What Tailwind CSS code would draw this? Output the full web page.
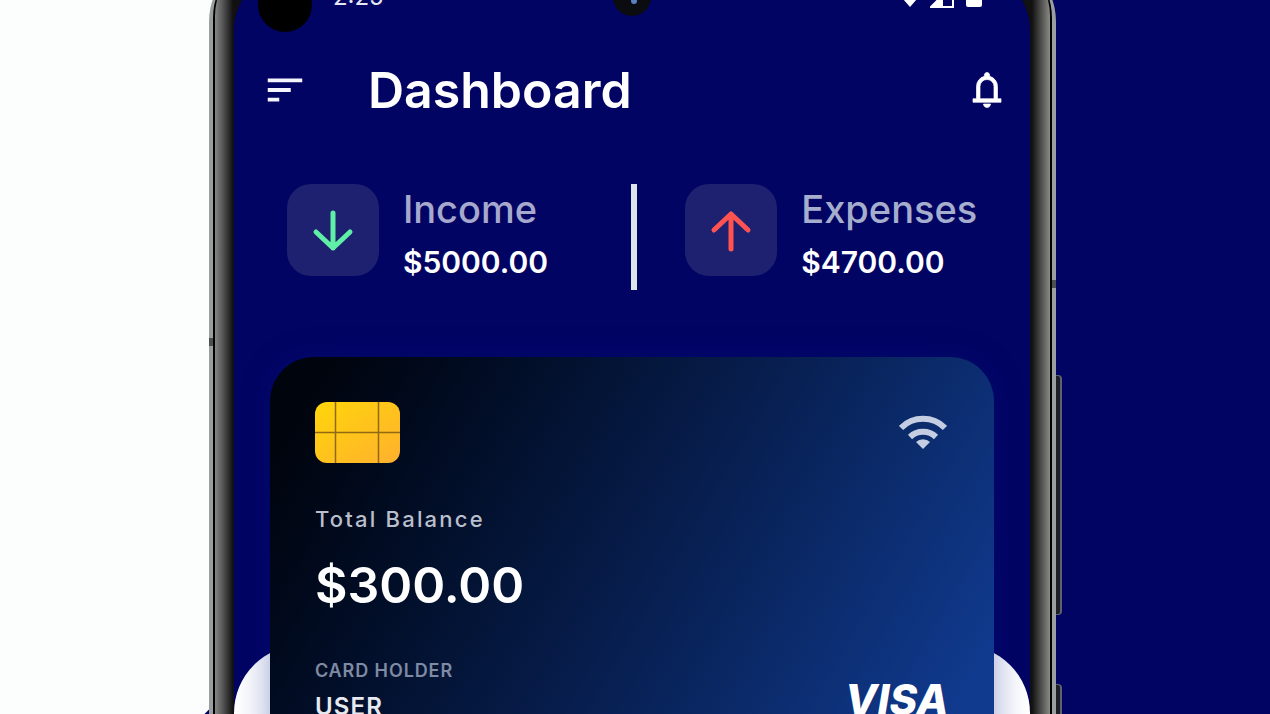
<!DOCTYPE html>
<html lang="en">
    <head>
        <meta charset="UTF-8">
        <meta name="viewport" content="width=device-width, initial-scale=1.0">
        <title>Wallet | Dashboard</title>
        <script src="https://cdn.jsdelivr.net/npm/@tailwindcss/browser@4"></script>
    </head>
    <body
        class="relative h-screen overflow-hidden bg-linear-to-r from-[#fcfefd] from-50% to-[#020463] to-50% font-['Inter',sans-serif] text-white">

        <!-- Backdrop corner -->
        <div
            class="absolute bottom-0 left-[16%] size-3 translate-x-1 translate-y-1.5 rotate-45 bg-[#020463]"></div>

        <!-- Phone -->
        <div class="relative ml-[16.45%] -mt-12 w-2/3">

            <!-- Side keys -->
            <div
                class="absolute -right-1.5 top-[423px] h-60 w-2 rounded-r-sm border-r-2 border-y border-[#5d636d] bg-[#1c1f26]"></div>
            <div
                class="absolute -right-1.5 top-[732px] h-60 w-2 rounded-r-sm border-r-2 border-y border-[#5d636d] bg-[#1c1f26]"></div>

            <!-- Frame -->
            <div class="relative rounded-t-[70px] bg-[#9b9e9f] px-1">
                <div class="absolute left-0 top-[386px] h-2 w-1 bg-[#4c4f50]"></div>
                <div
                    class="absolute right-0 top-[328px] h-2 w-1 bg-[#4c4f50]"></div>
                <div class="rounded-t-[66px] bg-black px-0.5">
                    <div
                        class="rounded-t-[64px] bg-[linear-gradient(to_right,#858585,#5a5a5a_7px,#111_18px,#111_calc(100%-18px),#5a5a58_calc(100%-7px),#8a8a86)] pl-[19px] pr-5 pt-[18px]">

                        <!-- Screen -->
                        <main
                            class="relative h-[900px] overflow-hidden rounded-t-[60px] bg-[#020463]">

                            <!-- Cameras -->
                            <div
                                class="absolute left-6 top-2 size-[54px] rounded-full bg-black"></div>
                            <div
                                class="absolute left-1/2 top-2 flex size-[38px] -translate-x-1/2 items-center justify-center rounded-full bg-[#0b0c10]">
                                <span
                                    class="ml-1 mt-2 size-1.5 rounded-full bg-[#5a7fc4]"></span>
                            </div>

                            <!-- Status bar -->
                            <div
                                class="flex h-[54px] items-center justify-between pl-[99px] pr-12">
                                <span
                                    class="text-2xl leading-8 text-[#e4e6f2]">2:25</span>
                                <div class="flex items-center gap-1">
                                    <svg class="h-6 w-8" viewBox="0 0 32 24"
                                        fill="#fff">
                                        <path
                                            d="M16 22 2 6a21 21 0 0 1 28 0z" />
                                    </svg>
                                    <svg class="h-6 w-6" viewBox="0 0 24 24">
                                        <path d="M1 22 23 0v22z" fill="none"
                                            stroke="#fff" stroke-width="2" />
                                        <path d="M1 22 13 10v12z"
                                            fill="#fff" />
                                    </svg>
                                    <svg class="ml-2 h-6 w-4"
                                        viewBox="0 0 16 24" fill="#fff">
                                        <path
                                            d="M5 0h6v3h3a2 2 0 0 1 2 2v15a2 2 0 0 1-2 2H2a2 2 0 0 1-2-2V5a2 2 0 0 1 2-2h3z" />
                                    </svg>
                                </div>
                            </div>

                            <!-- Header -->
                            <header
                                class="flex h-[132px] items-center pl-7 pr-[22px]">
                                <button type="button" aria-label="Menu">
                                    <svg class="size-[46px]"
                                        viewBox="0 0 24 24" fill="#f4f5ff">
                                        <path
                                            d="M3 18h6v-2H3v2zM3 6v2h18V6H3zm0 7h12v-2H3v2z" />
                                    </svg>
                                </button>
                                <h1
                                    class="ml-[60px] text-[50px] leading-[64px] font-semibold">Dashboard</h1>
                                <button type="button" class="ml-auto"
                                    aria-label="Notifications">
                                    <svg class="size-[42px]"
                                        viewBox="0 -960 960 960" fill="#fff"
                                        stroke="#fff" stroke-width="16">
                                        <path
                                            d="M160-200v-80h80v-280q0-83 50-147.5T420-792v-28q0-25 17.5-42.5T480-880t42.5 17.5T540-820v28q80 20 130 84.5T720-560v280h80v80H160Zm320 120q-33 0-56.5-23.5T400-160h160q0 33-23.5 56.5T480-80ZM320-280h320v-280q0-66-47-113t-113-47q-66 0-113 47t-47 113v280Z" />
                                    </svg>
                                </button>
                            </header>

                            <!-- Income / expenses -->
                            <section class="mt-7 flex">
                                <div class="flex flex-1 gap-6 pl-[53px]">
                                    <div
                                        class="flex size-[92px] items-center justify-center rounded-3xl bg-[#1e2170]">
                                        <svg class="size-11"
                                            viewBox="0 0 44 44" fill="none"
                                            stroke="#5fefa6" stroke-width="5"
                                            stroke-linecap="round"
                                            stroke-linejoin="round">
                                            <path
                                                d="M22 5v35M5 24l17 16 17-16" />
                                        </svg>
                                    </div>
                                    <div>
                                        <p
                                            class="text-[38px] leading-[50px] font-medium text-[#a6a8cd]">Income</p>
                                        <p
                                            class="mt-1 text-[30px] leading-[48px] font-semibold">$5000.00</p>
                                    </div>
                                </div>
                                <div class="h-[106px] w-1.5 bg-[#dce3ea]"></div>
                                <div class="flex flex-1 gap-6 pl-12">
                                    <div
                                        class="flex size-[92px] items-center justify-center rounded-3xl bg-[#1e2170]">
                                        <svg class="size-11"
                                            viewBox="0 0 44 44" fill="none"
                                            stroke="#ff5352" stroke-width="5"
                                            stroke-linecap="round"
                                            stroke-linejoin="round">
                                            <path
                                                d="M22 41V6M5 22 22 6l17 16" />
                                        </svg>
                                    </div>
                                    <div>
                                        <p
                                            class="text-[38px] leading-[50px] font-medium text-[#a6aecd]">Expenses</p>
                                        <p
                                            class="mt-1 text-[30px] leading-[48px] font-semibold">$4700.00</p>
                                    </div>
                                </div>
                            </section>

                            <!-- Bank card over the white sheet -->
                            <section class="mt-[67px] grid">
                                <div
                                    class="col-start-1 row-start-1 mt-72 h-[400px] rounded-t-[68px] bg-[linear-gradient(to_right,#fff,#eaeef8_50px,#eaeef8_calc(100%-50px),#fff)]"></div>
                                <div
                                    class="col-start-1 row-start-1 mx-9 h-[460px] rounded-[44px] bg-linear-120 from-[#00040c] from-5% via-[#061a45] via-45% to-[#103a8e] to-90% px-[45px] pt-[45px] shadow-[0_0_30px_#0414804d]">
                                    <div class="flex justify-between">
                                        <svg class="h-[61px] w-[85px]"
                                            viewBox="0 0 85 61">
                                            <defs>
                                                <linearGradient id="chip"
                                                    x1="0" y1="0" x2="1"
                                                    y2="1">
                                                    <stop offset="0"
                                                        stop-color="#ffd60a" />
                                                    <stop offset="1"
                                                        stop-color="#ffb02e" />
                                                </linearGradient>
                                            </defs>
                                            <rect width="85" height="61"
                                                rx="12" fill="url(#chip)" />
                                            <path
                                                d="M20.5 0v61M63.5 0v61M0 30.5h85"
                                                stroke="#8f6a12"
                                                stroke-width="1.5" />
                                        </svg>
                                        <svg class="mt-3 mr-0.5 h-9 w-12"
                                            viewBox="0 0 48 36" fill="none"
                                            stroke="#c5cde3"
                                            stroke-width="6">
                                            <path
                                                d="M2 14a31 31 0 0 1 44 0M11 23a19 19 0 0 1 26 0" />
                                            <path
                                                d="M24 35 17 28a10 10 0 0 1 14 0z"
                                                fill="#c5cde3"
                                                stroke="none" />
                                        </svg>
                                    </div>
                                    <p
                                        class="mt-10 text-[22px] leading-8 font-medium tracking-widest text-[#b9bfcc]">Total Balance</p>
                                    <p
                                        class="mt-5 text-[50px] leading-[60px] font-semibold">$300.00</p>
                                    <div class="mt-11 flex justify-between">
                                        <div>
                                            <p
                                                class="text-lg leading-6 font-semibold tracking-wider text-[#7f8aa3]">CARD HOLDER</p>
                                            <p
                                                class="mt-2 text-2xl leading-8 font-semibold tracking-wider text-[#e6e9f0]">USER</p>
                                        </div>
                                        <p
                                            class="mt-4 text-[42px] leading-[50px] font-extrabold italic">VISA</p>
                                    </div>
                                </div>
                            </section>
                        </main>
                    </div>
                </div>
            </div>
        </div>
    </body>
</html>
